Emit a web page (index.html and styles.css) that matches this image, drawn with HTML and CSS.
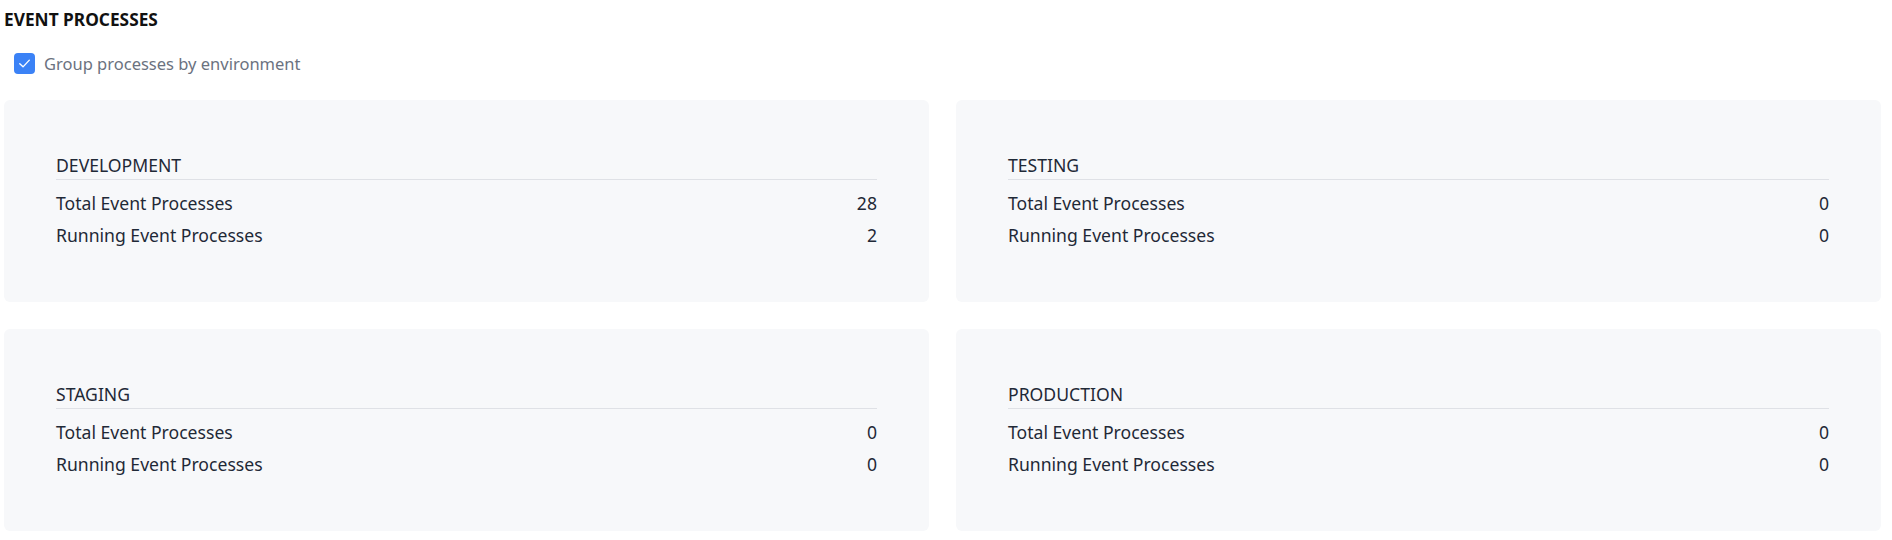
FILE: index.html
```html
<!DOCTYPE html>
<html lang="en">
<head>
<meta charset="utf-8">
<title>Event Processes</title>
<link rel="stylesheet" href="styles.css">
</head>
<body>
<div class="page">
  <h2 class="title">EVENT PROCESSES</h2>
  <label class="toggle">
    <span class="checkbox">
      <svg viewBox="0 0 20 20" width="21" height="21" aria-hidden="true">
        <path d="M5.5 10.2 L8.6 13.2 L14.6 6.8" fill="none" stroke="#ffffff" stroke-width="1.3" stroke-linecap="round" stroke-linejoin="round"/>
      </svg>
    </span>
    <span class="toggle-label">Group processes by environment</span>
  </label>
  <div class="grid">
    <section class="card">
      <div class="card-body">
        <div class="card-title">DEVELOPMENT</div>
        <div class="row"><span>Total Event Processes</span><span>28</span></div>
        <div class="row"><span>Running Event Processes</span><span>2</span></div>
      </div>
    </section>
    <section class="card">
      <div class="card-body">
        <div class="card-title">TESTING</div>
        <div class="row"><span>Total Event Processes</span><span>0</span></div>
        <div class="row"><span>Running Event Processes</span><span>0</span></div>
      </div>
    </section>
    <section class="card">
      <div class="card-body">
        <div class="card-title">STAGING</div>
        <div class="row"><span>Total Event Processes</span><span>0</span></div>
        <div class="row"><span>Running Event Processes</span><span>0</span></div>
      </div>
    </section>
    <section class="card">
      <div class="card-body">
        <div class="card-title">PRODUCTION</div>
        <div class="row"><span>Total Event Processes</span><span>0</span></div>
        <div class="row"><span>Running Event Processes</span><span>0</span></div>
      </div>
    </section>
  </div>
</div>
</body>
</html>
```

FILE: styles.css
```css
* { box-sizing: border-box; }
html, body { margin: 0; padding: 0; background: #ffffff; }
body {
  font-family: "Noto Sans", "Open Sans", sans-serif;
  color: #1f2937;
}
.page {
  padding: 8px 11px 0 4px;
}
.title {
  margin: 0;
  font-size: 17.3px;
  line-height: 24px;
  font-weight: 700;
  color: #111111;
}
.toggle {
  display: flex;
  align-items: center;
  gap: 9px;
  margin: 21px 0 0 10px;
  height: 21px;
}
.checkbox {
  flex: none;
  width: 21px;
  height: 21px;
  border-radius: 4px;
  background: #3b82f6;
  display: flex;
}
.checkbox svg { display: block; }
.toggle-label {
  font-size: 16.5px;
  line-height: 24px;
  color: #6b7280;
  padding-top: 1px;
}
.grid {
  margin-top: 26px;
  display: grid;
  grid-template-columns: 1fr 1fr;
  gap: 27px;
}
.card {
  background: #f7f8fa;
  border-radius: 6px;
  height: 202px;
  padding: 53px 52px;
}
.card-title {
  font-size: 17.6px;
  line-height: 24px;
  padding-bottom: 2px;
  border-bottom: 1px solid #dfe1e6;
  margin-bottom: 11px;
}
.row {
  display: flex;
  justify-content: space-between;
  font-size: 17.6px;
  line-height: 24px;
}
.row + .row { margin-top: 8px; }
```
